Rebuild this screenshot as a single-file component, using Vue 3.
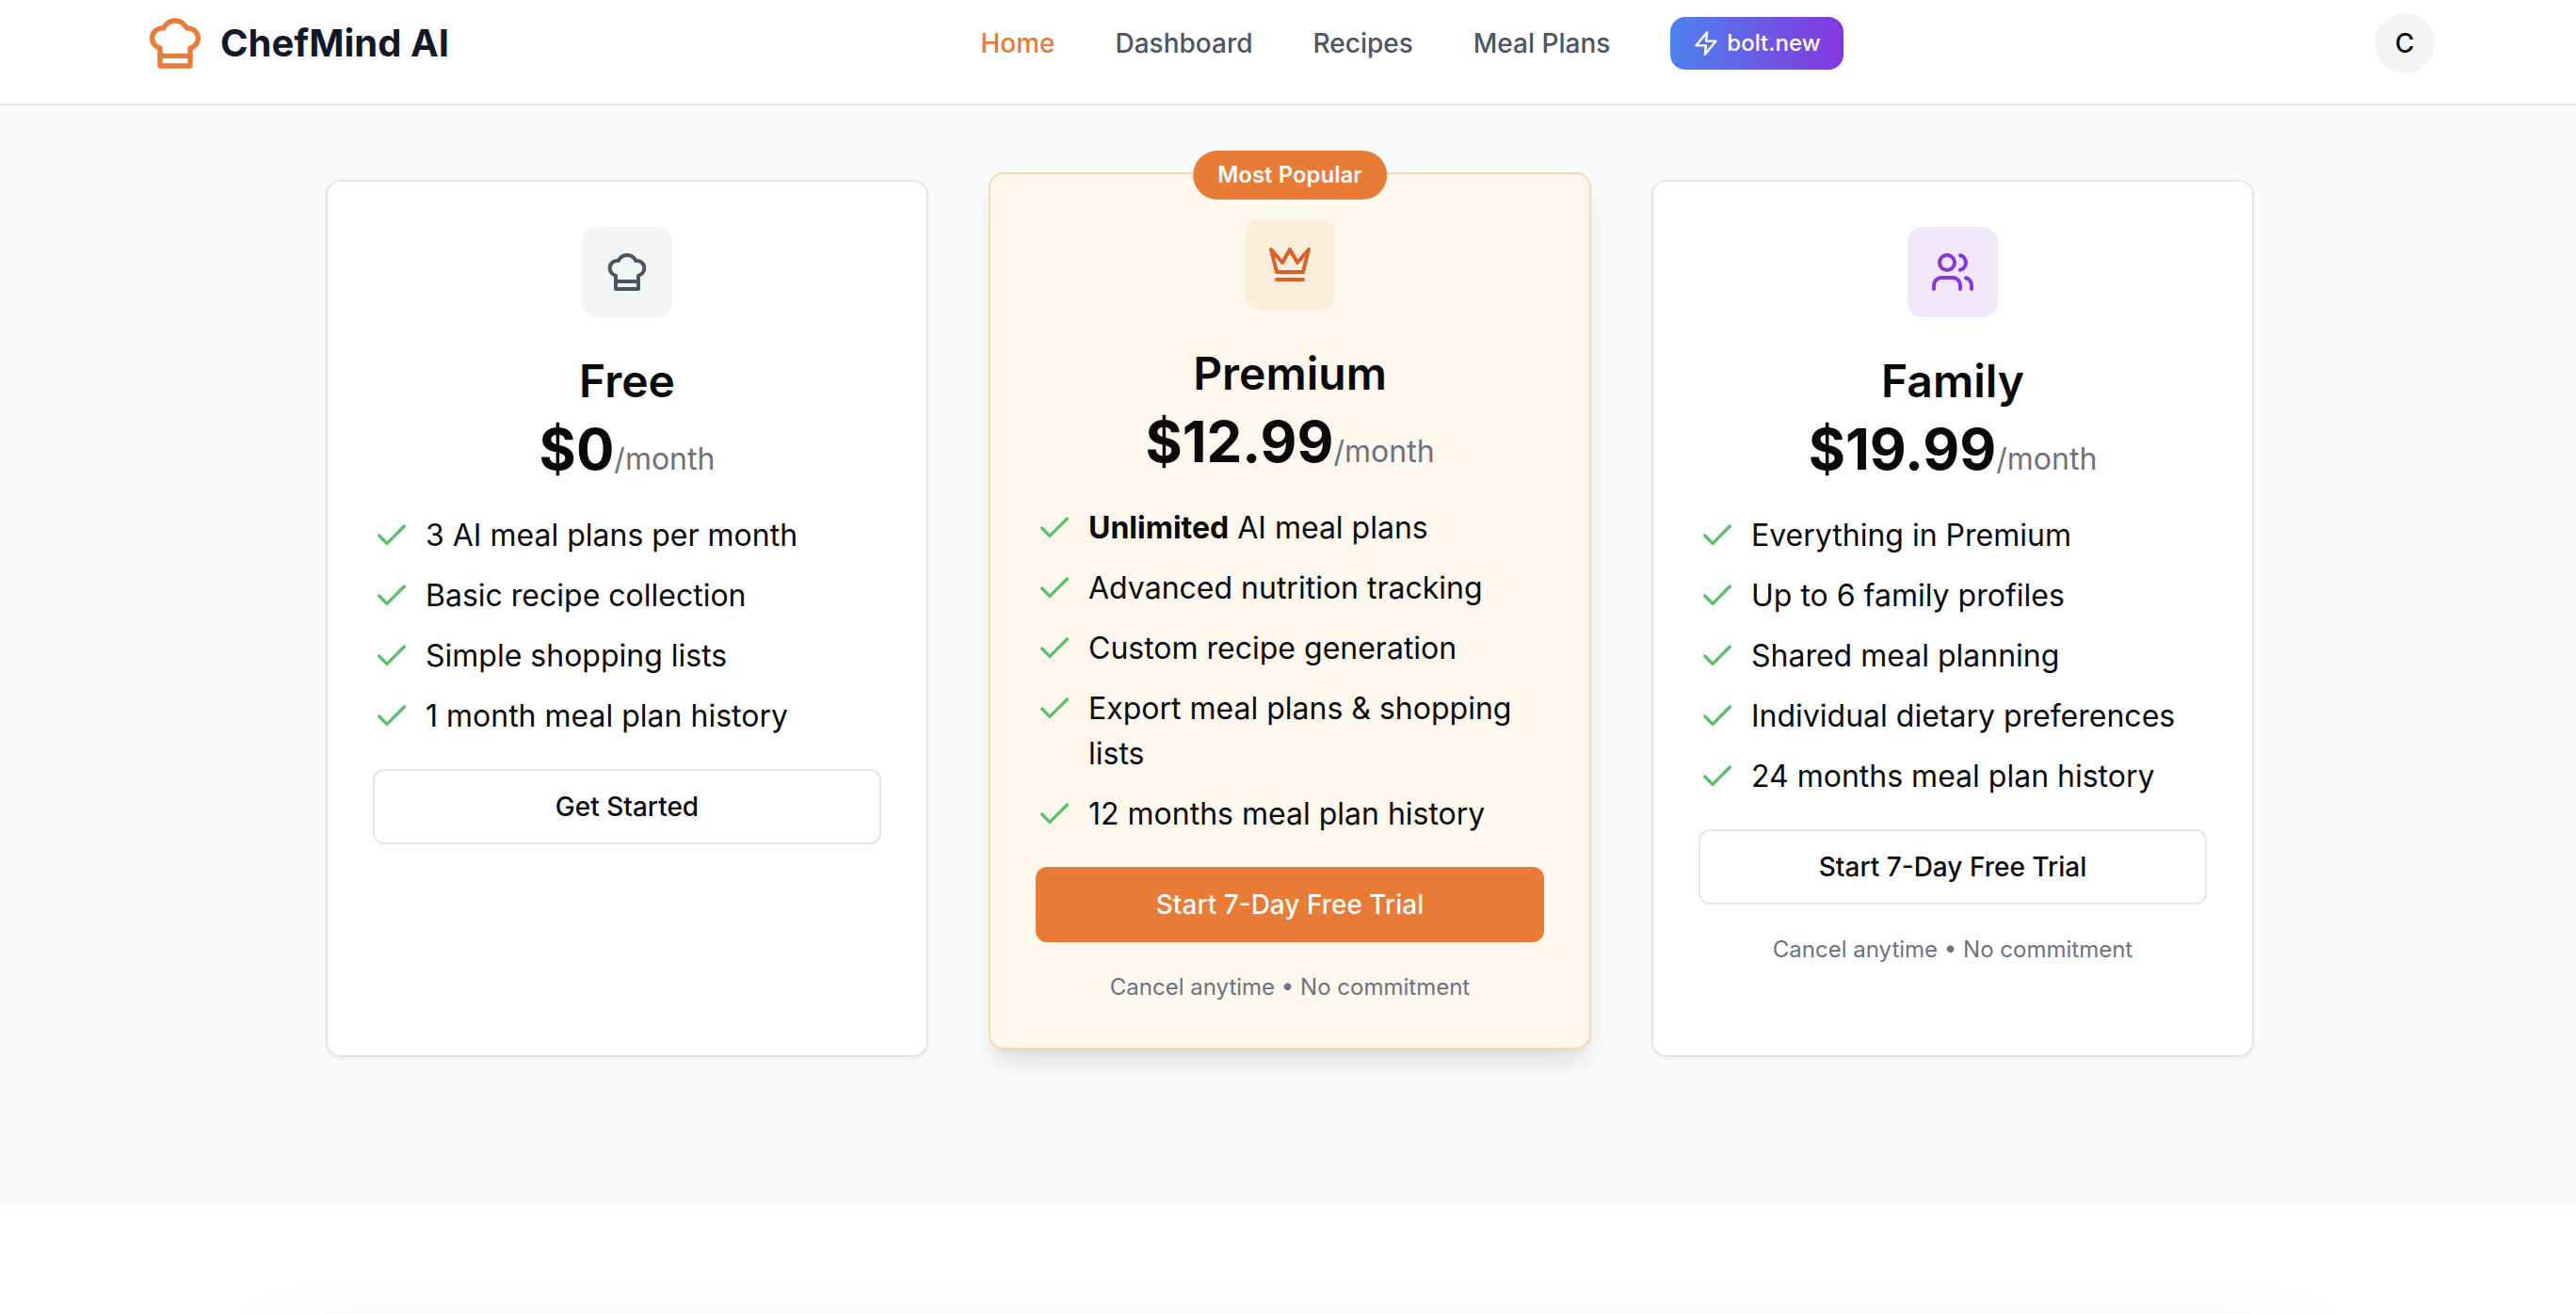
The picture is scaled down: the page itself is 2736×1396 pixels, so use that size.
<script setup>
const links = [
  { label: 'Home', active: true },
  { label: 'Dashboard', active: false },
  { label: 'Recipes', active: false },
  { label: 'Meal Plans', active: false },
]

const plans = [
  {
    id: 'free',
    name: 'Free',
    price: '$0',
    icon: 'chef',
    features: [
      { text: '3 AI meal plans per month' },
      { text: 'Basic recipe collection' },
      { text: 'Simple shopping lists' },
      { text: '1 month meal plan history' },
    ],
    cta: 'Get Started',
  },
  {
    id: 'premium',
    name: 'Premium',
    price: '$12.99',
    icon: 'crown',
    badge: 'Most Popular',
    features: [
      { strong: 'Unlimited', text: ' AI meal plans' },
      { text: 'Advanced nutrition tracking' },
      { text: 'Custom recipe generation' },
      { text: 'Export meal plans & shopping lists' },
      { text: '12 months meal plan history' },
    ],
    cta: 'Start 7-Day Free Trial',
    note: 'Cancel anytime • No commitment',
  },
  {
    id: 'family',
    name: 'Family',
    price: '$19.99',
    icon: 'users',
    features: [
      { text: 'Everything in Premium' },
      { text: 'Up to 6 family profiles' },
      { text: 'Shared meal planning' },
      { text: 'Individual dietary preferences' },
      { text: '24 months meal plan history' },
    ],
    cta: 'Start 7-Day Free Trial',
    note: 'Cancel anytime • No commitment',
  },
]
</script>

<template>
  <div class="page">
    <header class="site-header">
      <div class="bar">
        <a href="#" class="brand">
          <svg class="icon brand-icon" viewBox="0 0 24 24" aria-hidden="true">
            <path d="M6 13.87A4 4 0 0 1 7.41 6a5.11 5.11 0 0 1 1.05-1.54 5 5 0 0 1 7.08 0A5.11 5.11 0 0 1 16.59 6 4 4 0 0 1 18 13.87V21H6Z" />
            <path d="M6 17h12" />
          </svg>
          <span>ChefMind AI</span>
        </a>
        <nav class="nav">
          <a
            v-for="link in links"
            :key="link.label"
            href="#"
            class="nav-link"
            :class="{ active: link.active }"
          >{{ link.label }}</a>
          <a href="#" class="bolt">
            <svg class="icon bolt-icon" viewBox="0 0 24 24" aria-hidden="true">
              <path d="M13 2 3 14h9l-1 8 10-12h-9l1-8z" />
            </svg>
            <span>bolt.new</span>
          </a>
        </nav>
        <button type="button" class="avatar">C</button>
      </div>
    </header>

    <main class="pricing">
      <div class="plans">
        <article v-for="plan in plans" :key="plan.id" class="card" :class="plan.id">
          <span v-if="plan.badge" class="badge">{{ plan.badge }}</span>
          <div class="card-head">
            <div class="tile">
              <svg class="icon tile-icon" viewBox="0 0 24 24" aria-hidden="true">
                <template v-if="plan.icon === 'chef'">
                  <path d="M6 13.87A4 4 0 0 1 7.41 6a5.11 5.11 0 0 1 1.05-1.54 5 5 0 0 1 7.08 0A5.11 5.11 0 0 1 16.59 6 4 4 0 0 1 18 13.87V21H6Z" />
                  <path d="M6 17h12" />
                </template>
                <template v-else-if="plan.icon === 'crown'">
                  <path d="m2 4 3 12h14l3-12-6 7-4-7-4 7-6-7z" />
                  <path d="M5 20h14" />
                </template>
                <template v-else>
                  <path d="M16 21v-2a4 4 0 0 0-4-4H6a4 4 0 0 0-4 4v2" />
                  <circle cx="9" cy="7" r="4" />
                  <path d="M22 21v-2a4 4 0 0 0-3-3.87" />
                  <path d="M16 3.13a4 4 0 0 1 0 7.75" />
                </template>
              </svg>
            </div>
            <h3 class="name">{{ plan.name }}</h3>
            <p class="price">{{ plan.price }}<span class="per">/month</span></p>
          </div>
          <ul class="features">
            <li v-for="feature in plan.features" :key="feature.text">
              <svg class="icon check" viewBox="0 0 24 24" aria-hidden="true">
                <path d="M20 6 9 17l-5-5" />
              </svg>
              <span><strong v-if="feature.strong">{{ feature.strong }}</strong>{{ feature.text }}</span>
            </li>
          </ul>
          <button type="button" class="cta">{{ plan.cta }}</button>
          <p v-if="plan.note" class="note">{{ plan.note }}</p>
        </article>
      </div>
    </main>

    <section class="below">
      <div class="haze"></div>
    </section>
  </div>
</template>

<style>
body {
  margin: 0;
  background: #fff;
}
</style>

<style scoped>
.page {
  display: flex;
  flex-direction: column;
  min-height: 100vh;
  font-family: Inter, "Liberation Sans", sans-serif;
  color: #0a0a0a;
}

.icon {
  display: block;
  flex: none;
  fill: none;
  stroke: currentColor;
  stroke-width: 2;
  stroke-linecap: round;
  stroke-linejoin: round;
}

a {
  color: inherit;
  text-decoration: none;
}

/* Header */
.site-header {
  padding: 14px 64px 32px 68px;
  background: #fff;
  border-bottom: 2px solid #e5e7eb;
}

.bar {
  display: flex;
  align-items: center;
  justify-content: space-between;
  max-width: 2432px;
  margin: 0 auto;
}

.brand {
  display: flex;
  align-items: center;
  gap: 16px;
  font-size: 40px;
  line-height: 56px;
  font-weight: 700;
  color: #111827;
}

.brand-icon {
  width: 64px;
  height: 64px;
  color: #e87b35;
}

.nav {
  display: flex;
  align-items: center;
  gap: 64px;
}

.nav-link {
  font-size: 28px;
  line-height: 40px;
  font-weight: 500;
  color: #4b5563;
}

.nav-link.active {
  color: #e87b35;
}

.bolt {
  display: flex;
  align-items: center;
  gap: 8px;
  padding: 12px 24px;
  border-radius: 16px;
  background: linear-gradient(to right, #4d82ee, #8537de);
  box-shadow: 0 2px 4px rgba(0, 0, 0, 0.05);
  font-size: 24px;
  line-height: 32px;
  font-weight: 500;
  color: #fff;
}

.bolt-icon {
  width: 28px;
  height: 28px;
}

.avatar {
  width: 64px;
  height: 64px;
  padding: 0;
  border: 0;
  border-radius: 50%;
  background: #f4f4f4;
  font: 500 28px/40px Inter, "Liberation Sans", sans-serif;
  color: #0a0a0a;
}

/* Pricing */
.pricing {
  padding: 79px 64px 160px 68px;
  background: #f9fafb;
}

.plans {
  display: grid;
  grid-template-columns: repeat(3, minmax(0, 1fr));
  gap: 64px;
  max-width: 2048px;
  margin: 0 auto;
}

.card {
  position: relative;
  display: flex;
  flex-direction: column;
  padding: 48px;
  border: 2px solid #e5e5e5;
  border-radius: 16px;
  background: #fff;
  box-shadow: 0 2px 4px rgba(0, 0, 0, 0.05);
}

.card.premium {
  margin: -8px 0 8px;
  border-color: #f8d9ae;
  background: #fef7ed;
  box-shadow: 0 20px 30px -6px rgba(0, 0, 0, 0.1), 0 8px 12px -8px rgba(0, 0, 0, 0.1);
}

.badge {
  position: absolute;
  top: -25px;
  left: 50%;
  transform: translateX(-50%);
  padding: 10px 26px;
  border-radius: 26px;
  background: #e87b35;
  font-size: 24px;
  line-height: 32px;
  font-weight: 600;
  color: #fff;
  white-space: nowrap;
}

.card-head {
  display: flex;
  flex-direction: column;
  align-items: center;
  gap: 12px;
}

.tile {
  display: flex;
  align-items: center;
  justify-content: center;
  width: 96px;
  height: 96px;
  margin-bottom: 32px;
  border-radius: 16px;
  background: #f3f4f6;
  color: #4b5563;
}

.premium .tile {
  background: #fceeda;
  color: #d9622b;
}

.family .tile {
  background: #f0e7fd;
  color: #8537de;
}

.tile-icon {
  width: 48px;
  height: 48px;
}

.name {
  margin: 0;
  font-size: 48px;
  line-height: 48px;
  font-weight: 600;
}

.price {
  margin: 0;
  font-size: 60px;
  line-height: 72px;
  font-weight: 700;
}

.per {
  font-size: 32px;
  line-height: 48px;
  font-weight: 400;
  color: #6b7280;
}

.features {
  display: flex;
  flex-direction: column;
  gap: 16px;
  margin: 32px 0;
  padding: 0;
  list-style: none;
  font-size: 32px;
  line-height: 48px;
}

.features li {
  display: flex;
  align-items: flex-start;
  gap: 16px;
}

.features strong {
  font-weight: 700;
}

.check {
  width: 40px;
  height: 40px;
  margin-top: 4px;
  color: #57c266;
}

.cta {
  width: 100%;
  height: 80px;
  padding: 0 32px;
  border: 2px solid #e5e5e5;
  border-radius: 12px;
  background: #fff;
  font: 500 28px/40px Inter, "Liberation Sans", sans-serif;
  color: #0a0a0a;
}

.premium .cta {
  border-color: #e87b35;
  background: #e87b35;
  color: #fafafa;
}

.note {
  margin: 32px 0 0;
  font-size: 24px;
  line-height: 32px;
  text-align: center;
  color: #6b7280;
}

/* Start of the next section, with the soft edge of its panel's shadow */
.below {
  display: flex;
  flex: 1;
  align-items: flex-end;
  min-height: 112px;
  padding: 0 240px;
  background: #fff;
}

.haze {
  flex: 1;
  height: 40px;
  background: linear-gradient(to top, rgba(0, 0, 0, 0.015), rgba(0, 0, 0, 0));
  mask-image: linear-gradient(to right, transparent, #000 160px, #000 calc(100% - 160px), transparent);
}
</style>
